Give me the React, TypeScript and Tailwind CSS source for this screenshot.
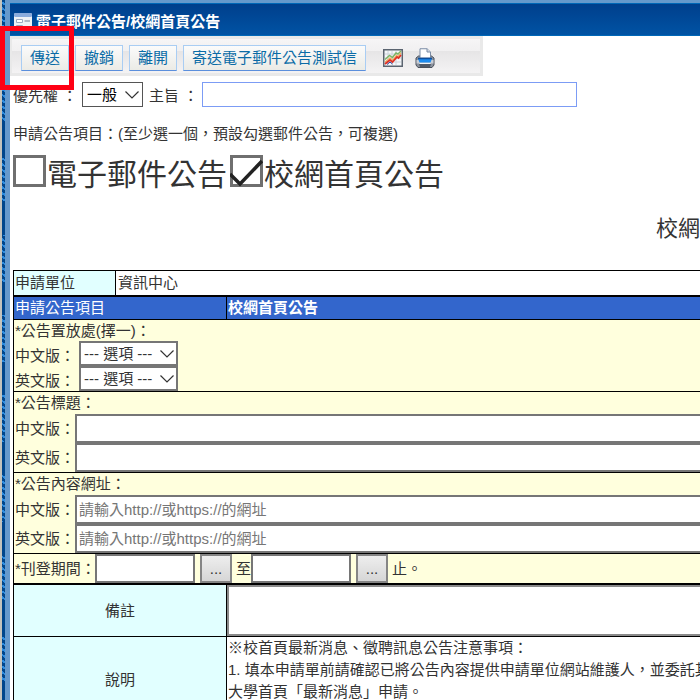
import React from "react";

const inputBox = "border-2 border-[#767676] bg-white px-[2px] text-[15px] text-[#333] outline-none placeholder:text-[#767676]";

function Chevron() {
  return (
    <svg viewBox="0 0 14 8" className="pointer-events-none absolute right-1 top-1/2 h-2 w-[14px] -translate-y-1/2" fill="none" stroke="#333" strokeWidth="1.2">
      <path d="M0.5 0.5 7 7 13.5 0.5" />
    </svg>
  );
}

function PlaceSelect({ id, label }: { id: string; label: string }) {
  return (
    <div className="flex h-[25px] items-center">
      <label htmlFor={id} className="w-16 shrink-0 whitespace-nowrap pt-1">{label}</label>
      <div className="relative">
        <select id={id} className="h-[25px] w-[99px] appearance-none border-2 border-[#767676] bg-white pb-[2px] pl-[3px] text-[15px] text-[#333]">
          <option>--- 選項 ---</option>
        </select>
        <Chevron />
      </div>
    </div>
  );
}

function TextRow({ id, label, placeholder }: { id: string; label: string; placeholder?: string }) {
  return (
    <div className="flex h-[29px] items-center">
      <label htmlFor={id} className="w-[60px] shrink-0 whitespace-nowrap">{label}</label>
      <input id={id} type="text" placeholder={placeholder} className={`h-[29px] min-w-0 flex-1 border-r-0 ${inputBox}`} />
    </div>
  );
}

function ToolButton({ children }: { children: React.ReactNode }) {
  return (
    <button className="h-[26px] whitespace-nowrap border border-[#a9cdf3] border-b-[#5b8fdc] bg-linear-to-b from-[#fbfbfb] to-[#ebebe6] px-2 text-[15px] leading-[22px] text-[#0a6ba6]">
      {children}
    </button>
  );
}

function ChartIcon() {
  return (
    <svg viewBox="0 0 20 18" className="h-[18px] w-5">
      <rect x="0.75" y="0.75" width="18.5" height="16.5" fill="#f5f7f9" stroke="#5b6470" strokeWidth="1.5" />
      <path d="M5 2v14M9 2v14M13 2v14M2 5h16M2 9h16M2 13h16" stroke="#ccd3dc" />
      <path d="M2 10.500 6.500 6.500 9.500 8.500 13 4 15 5 18 2" fill="none" stroke="#7db465" strokeWidth="1.500" />
      <path d="M2 13 7 9 10 11 13.500 6.500 15 7.500 18 4" fill="none" stroke="#f5b060" strokeWidth="1.300" />
      <path d="M2 15 7 11 9.500 13 14 8 15.500 9 18 6" fill="none" stroke="#e03225" strokeWidth="1.800" />
      <path d="M4 15.500 7 13 9.500 15" fill="none" stroke="#34409a" />
    </svg>
  );
}

function PrinterIcon() {
  return (
    <svg viewBox="0 0 20 20" className="size-5">
      <path d="M1 10 3.500 8H16.500L19 10V17L17 19.500H3L1 17Z" fill="#8b929d" stroke="#4a515c" />
      <path d="M1.500 12H18.500V15.500H1.500Z" fill="#c9cdd4" />
      <path d="M5 10V0.750H12L15.500 4V10Z" fill="#fff" stroke="#7a8ba4" />
      <path d="M12 0.750V4H15.500" fill="#d5dce6" stroke="#7a8ba4" />
      <path d="M3 10.500H17L15.500 14.500H4.500Z" fill="#1c8cf0" />
      <path d="M3 10.500H17" stroke="#0e4f9c" strokeWidth="1.500" />
      <path d="M4 16H16L15 19H5Z" fill="#505967" />
      <path d="M4.500 15.500H15.500" stroke="#f2f4f6" />
    </svg>
  );
}

function FormIcon() {
  return (
    <svg viewBox="0 0 18 18" className="h-[18px] w-[18px] shrink-0">
      <rect width="18" height="18" rx="1.500" fill="#eef1f5" />
      <rect width="18" height="4" rx="1.500" fill="#8aabdc" />
      <path d="M2.500 6.500H8.500V9.500H2.500ZM2.500 12.500H8.500V15.500H2.500Z" fill="#fff" stroke="#9aa9c0" />
      <path d="M10.500 8H16M10.500 14H16" stroke="#9aa4b4" strokeWidth="1.500" />
    </svg>
  );
}

function BigCheck({ label, checked }: { label: string; checked?: boolean }) {
  return (
    <label className="flex items-center whitespace-nowrap">
      <span className="relative mb-2 mr-px block h-8 w-[33px]">
        <input type="checkbox" defaultChecked={checked} className="peer block h-8 w-[33px] appearance-none border-3 border-[#6f6f6f] bg-white" />
        <svg viewBox="0 0 33 32" className="pointer-events-none absolute inset-0 hidden h-8 w-[33px] peer-checked:block" fill="none" stroke="#222" strokeWidth="3.500">
          <path d="M0 19 10 29 32 6" />
        </svg>
      </span>
      {label}
    </label>
  );
}

export default function App() {
  return (
    <div
      lang="zh-TW"
      className="flex h-screen overflow-hidden bg-white font-['Liberation_Sans','Noto_Sans_CJK_TC',sans-serif] text-[15px] leading-[22px] text-[#333]"
    >
      <div className="relative flex w-[10px] shrink-0 border-r-5 border-[#6699cc]">
        <div className="w-[2px] bg-[#c3c3bd]" />
        <div className="w-[3px] bg-[#00468c]">
          <div className="h-full bg-[repeating-linear-gradient(30deg,#00468c_0px,#00468c_3px,#2f8de0_3px,#2f8de0_5px)] [mask-image:repeating-linear-gradient(to_bottom,#000_0px,#000_42px,transparent_42px,transparent_75px,#000_75px,#000_80px)]" />
        </div>
        <div className="pointer-events-none absolute left-0 top-[26px] z-10 h-16 w-[74px] border-5 border-[#ff0014]" />
      </div>

      <div className="flex min-w-0 flex-1 flex-col border-t-3 border-[#6699cc]">
        <header className="flex h-[33px] shrink-0 items-center gap-1 border-y border-y-[#0068b8] bg-linear-to-b from-[#003f8c] to-[#0053a4] pl-1 pt-1 font-bold text-white">
          <FormIcon />
          <h1>電子郵件公告/校網首頁公告</h1>
        </header>

        <div className="flex h-10 w-[473px] shrink-0 items-center gap-[6px] border-3 border-l-2 border-[#e9e9e9] bg-[linear-gradient(to_bottom,#f6f5f6,#f1f0f1_35%,#e6e5e6_36%,#f4f3f4)] pl-[9px] pt-1">
          <ToolButton>傳送</ToolButton>
          <ToolButton>撤銷</ToolButton>
          <ToolButton>離開</ToolButton>
          <ToolButton>寄送電子郵件公告測試信</ToolButton>
          <button aria-label="統計" className="ml-[11px]"><ChartIcon /></button>
          <button aria-label="列印" className="ml-[6px]"><PrinterIcon /></button>
        </div>

        <main className="pl-[3px]">
          <div className="mt-[6px] flex h-[25px] items-center whitespace-nowrap">
            <label htmlFor="priority" className="w-[69px] shrink-0 pt-[2px]">優先權&nbsp;：</label>
            <div className="relative">
              <select id="priority" className="h-[25px] w-[61px] appearance-none border border-[#555] bg-white pl-1 text-[15px] text-black">
                <option>一般</option>
              </select>
              <Chevron />
            </div>
            <label htmlFor="subject" className="w-[59px] shrink-0 pl-[6px] pt-[2px]">主旨&nbsp;：</label>
            <input id="subject" type="text" className="h-[25px] w-[375px] border border-[#7c9cf5] outline-none" />
          </div>

          <p className="mt-4">申請公告項目：(至少選一個，預設勾選郵件公告，可複選)</p>

          <div className="mt-2 flex h-11 items-center gap-[3px] text-[30px]">
            <BigCheck label="電子郵件公告" />
            <BigCheck label="校網首頁公告" checked />
          </div>

          <h2 className="mb-6 mt-4 text-right text-[22px] leading-8">校網</h2>

          <table className="mt-[25px] w-full border-separate border-spacing-0 border-l border-t border-black">
            <tbody>
              <tr>
                <th scope="row" className="h-6 w-[102px] border-r border-black bg-[#e1ffff] p-0 pl-px text-left font-normal">申請單位</th>
                <td className="h-6 py-0 pl-[2px]">資訊中心</td>
              </tr>
            </tbody>
          </table>

          <table className="w-full border-separate border-spacing-0 border-l border-t-2 border-black">
            <thead>
              <tr className="bg-[#3366cc] text-left text-white">
                <th className="h-[22px] w-[213px] border-r border-black py-0 pl-px font-normal">申請公告項目</th>
                <th className="h-[22px] p-0 pl-px">校網首頁公告</th>
              </tr>
            </thead>
            <tbody className="bg-[#ffffdd]">
              <tr>
                <td colSpan={2} className="border-t border-black p-0 pl-px">
                  <p className="h-[21px]">*公告置放處(擇一)：</p>
                  <PlaceSelect id="place-zh" label="中文版：" />
                  <PlaceSelect id="place-en" label="英文版：" />
                </td>
              </tr>
              <tr>
                <td colSpan={2} className="border-t border-black p-0 pl-px">
                  <p>*公告標題：</p>
                  <TextRow id="title-zh" label="中文版：" />
                  <TextRow id="title-en" label="英文版：" />
                </td>
              </tr>
              <tr>
                <td colSpan={2} className="border-t border-black p-0 pl-px">
                  <p>*公告內容網址：</p>
                  <TextRow id="url-zh" label="中文版：" placeholder="請輸入http://或https://的網址" />
                  <TextRow id="url-en" label="英文版：" placeholder="請輸入http://或https://的網址" />
                </td>
              </tr>
              <tr>
                <td colSpan={2} className="border-t border-black p-0 pl-px">
                  <div className="flex h-[29px] items-center">
                    <label htmlFor="from" className="w-20 shrink-0 whitespace-nowrap">*刊登期間：</label>
                    <input id="from" type="text" className={`h-[29px] w-[100px] ${inputBox}`} />
                    <button className="ml-[5px] h-[29px] w-8 border-2 border-[#858585] bg-linear-to-b from-[#eee] to-[#d6d6d6]">...</button>
                    <label htmlFor="to" className="ml-1">至</label>
                    <input id="to" type="text" className={`h-[29px] w-[100px] ${inputBox}`} />
                    <button className="ml-[5px] h-[29px] w-8 border-2 border-[#858585] bg-linear-to-b from-[#eee] to-[#d6d6d6]">...</button>
                    <span className="ml-1">止。</span>
                  </div>
                </td>
              </tr>
            </tbody>
          </table>

          <table className="w-full border-separate border-spacing-0 border-l border-t-2 border-black">
            <tbody>
              <tr>
                <th scope="row" className="w-[213px] border-r border-black bg-[#e1ffff] p-0 font-normal">
                  <label htmlFor="remark">備註</label>
                </th>
                <td className="p-0">
                  <textarea id="remark" className="block h-[51px] w-full resize-none border-2 border-r-0 border-[#8a8a8a] outline-none" />
                </td>
              </tr>
              <tr>
                <th scope="row" className="h-[86px] border-r border-t border-black bg-[#e1ffff] p-0 font-normal">說明</th>
                <td className="border-t border-black p-0 pl-px align-top">
                  <div className="w-0 whitespace-nowrap">
                    <p>※校首頁最新消息、徵聘訊息公告注意事項：</p>
                    <p>1. 填本申請單前請確認已將公告內容提供申請單位網站維護人，並委託其</p>
                    <p>大學首頁「最新消息」申請。</p>
                  </div>
                </td>
              </tr>
            </tbody>
          </table>
        </main>
      </div>
    </div>
  );
}
